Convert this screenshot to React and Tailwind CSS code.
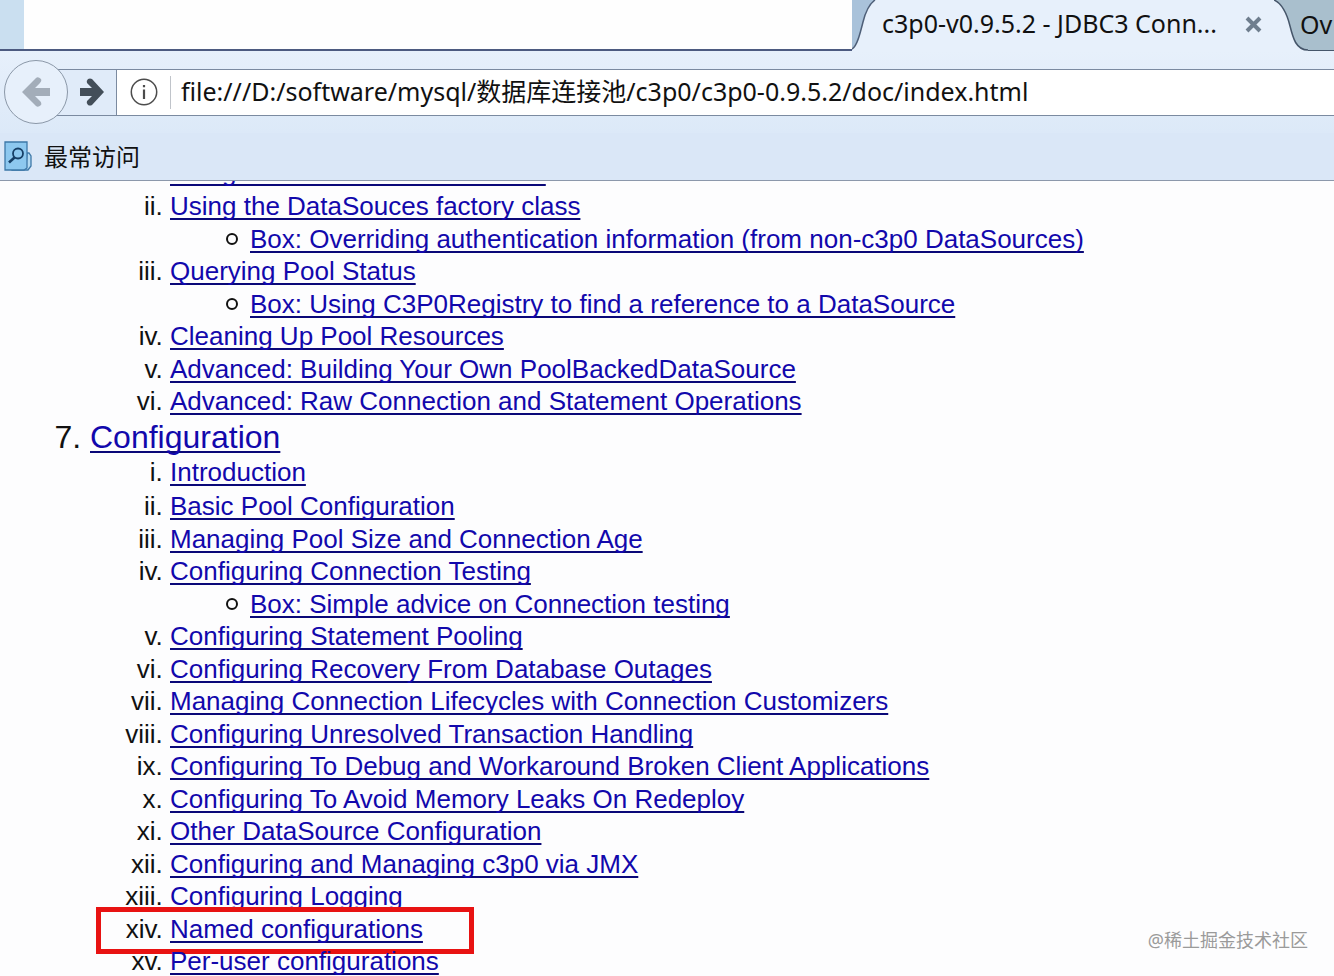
const usageLinks = [
  { label: "Using ComboPooledDataSource" },
  { label: "Using the DataSouces factory class" },
  {
    box: "Box: Overriding authentication information (from non-c3p0 DataSources)",
  },
  { label: "Querying Pool Status" },
  { box: "Box: Using C3P0Registry to find a reference to a DataSource" },
  { label: "Cleaning Up Pool Resources" },
  { label: "Advanced: Building Your Own PoolBackedDataSource" },
  { label: "Advanced: Raw Connection and Statement Operations" },
];

const configurationLinks = [
  { label: "Introduction" },
  { label: "Basic Pool Configuration" },
  { label: "Managing Pool Size and Connection Age" },
  { label: "Configuring Connection Testing" },
  { box: "Box: Simple advice on Connection testing" },
  { label: "Configuring Statement Pooling" },
  { label: "Configuring Recovery From Database Outages" },
  { label: "Managing Connection Lifecycles with Connection Customizers" },
  { label: "Configuring Unresolved Transaction Handling" },
  { label: "Configuring To Debug and Workaround Broken Client Applications" },
  { label: "Configuring To Avoid Memory Leaks On Redeploy" },
  { label: "Other DataSource Configuration" },
  { label: "Configuring and Managing c3p0 via JMX" },
  { label: "Configuring Logging" },
  { label: "Named configurations", highlighted: true },
  { label: "Per-user configurations" },
];

function DocLink({ children }) {
  return (
    <a
      href="#"
      className="text-[#1208ac] underline decoration-[#0a0878] decoration-2 underline-offset-3 [text-decoration-skip-ink:none]"
    >
      {children}
    </a>
  );
}

function SubList({ links }) {
  // boxes sit between the numbered entries but don't count
  const numbered = links.filter((link) => link.label);

  return (
    <ol className="list-[lower-roman] pl-20 text-[26px]">
      {links.map((link) =>
        link.box ? (
          <li
            key={link.box}
            className="list-none odd:leading-[32px] even:leading-[33px]"
          >
            <ul className="pl-14">
              <li className="flex items-center gap-3">
                <span className="size-3 rounded-full border-2 border-[#111]" />
                <DocLink>{link.box}</DocLink>
              </li>
            </ul>
          </li>
        ) : (
          <li
            key={link.label}
            value={numbered.indexOf(link) + 1}
            className="relative first:mb-0.5 odd:leading-[32px] even:leading-[33px]"
          >
            <DocLink>{link.label}</DocLink>
            {link.highlighted && (
              <span className="absolute -top-1.5 -left-[74px] h-[47px] w-[378px] border-5 border-[#e81212]" />
            )}
          </li>
        )
      )}
    </ol>
  );
}

function TabStrip() {
  return (
    <div className="flex h-[51px] shrink-0 bg-[#e7f0fb]">
      <div className="w-6 border-b-2 border-[#4c5a80] bg-[#cadff0]" />
      <div className="flex-1 border-b-2 border-[#4c5a80] bg-[#fefefe]" />
      <svg width="30" height="51" viewBox="0 0 30 51" fill="none">
        <path d="M0 0H23C16 5 13 14 11 22C8 34 5 44 0 48Z" fill="#a9c2da" />
        <path
          d="M23 0C16 5 13 14 11 22C8 34 5 46 0 49"
          stroke="#4e5f78"
          strokeWidth="1.5"
        />
      </svg>
      <div className="flex h-12 items-center">
        <span className="w-[355px] truncate text-[25px] text-[#111]">
          c3p0-v0.9.5.2 - JDBC3 Conn...
        </span>
        <button aria-label="Close tab" className="ml-1 p-1">
          <svg width="17" height="17" viewBox="0 0 17 17">
            <path
              d="M2 2L15 15M15 2L2 15"
              stroke="#6f7e8e"
              strokeWidth="4"
            />
          </svg>
        </button>
      </div>
      <svg
        width="34"
        height="51"
        viewBox="0 0 34 51"
        fill="none"
        className="ml-2"
      >
        <path
          d="M0 0C9 4 13 14 16 26C19 38 22 50 34 50V0Z"
          fill="#a9bfcd"
        />
        <path
          d="M0 0C9 4 13 14 16 26C19 38 22 50 34 50"
          stroke="#46566a"
          strokeWidth="1.5"
        />
      </svg>
      <div className="flex w-[26px] items-center border-b border-[#46566a] bg-[#a9bfcd]">
        <span className="relative -ml-2 text-[25px] text-[#111]">Ov</span>
      </div>
    </div>
  );
}

function Toolbar() {
  return (
    <div className="flex h-[82px] shrink-0 items-center bg-linear-to-b from-[#e7f0fb] to-[#dce9f8] pl-1">
      <button
        aria-label="Back"
        className="z-10 flex size-16 items-center justify-center rounded-full border border-[#8b98a8] bg-[#e7f0fb]"
      >
        <svg width="28" height="30" viewBox="0 0 28 30">
          <path
            d="M0 15L14 1Q16 -1 19 2Q20 4 18 6L13 11H28V19H13L18 24Q20 26 19 28Q16 31 14 29Z"
            fill="#a3adb9"
          />
        </svg>
      </button>
      <div className="-ml-3 flex h-[47px] flex-1 items-stretch border-y border-[#7b8aa0] bg-white">
        <button
          aria-label="Forward"
          className="flex w-[61px] items-center justify-center border-r border-[#7b8aa0] bg-[#e0ebf9] pl-3"
        >
          <svg width="24" height="28" viewBox="0 0 24 28">
            <path
              d="M24 14L12 1Q10 0 8 1Q6 3 7 5L12 10H0V18H12L7 23Q6 25 8 27Q10 28 12 27Z"
              fill="#434e59"
            />
          </svg>
        </button>
        <div className="flex w-[53px] items-center justify-center">
          <svg width="28" height="28" viewBox="0 0 28 28" fill="none">
            <circle cx="14" cy="14" r="12.7" stroke="#4c4c4c" strokeWidth="1.5" />
            <path d="M14 11.5V21M14 7V9.3" stroke="#4c4c4c" strokeWidth="2.2" />
          </svg>
        </div>
        <div className="my-1.5 w-px bg-[#c0c4ca]" />
        <input
          aria-label="Address"
          defaultValue="file:///D:/software/mysql/数据库连接池/c3p0/c3p0-0.9.5.2/doc/index.html"
          className="min-w-0 flex-1 bg-transparent px-2.5 text-[25px] text-[#111] outline-none"
        />
      </div>
    </div>
  );
}

function BookmarkBar() {
  return (
    <div className="flex h-12 shrink-0 items-center border-b border-[#8c98ab] bg-[#dae7f7] pl-1">
      <button className="flex items-center gap-3 text-2xl text-[#111]">
        <svg width="28" height="31" viewBox="0 0 28 31" fill="none">
          <path
            d="M23 12H25L27 15V25L24 29H8V26H22Z"
            fill="#b4daf3"
            stroke="#3d78a8"
            strokeWidth="1.3"
          />
          <path
            d="M1 1H23V27L20 29H1Z"
            fill="#8dc8ef"
            stroke="#3d78a8"
            strokeWidth="1.3"
          />
          <circle cx="14" cy="12.5" r="5" stroke="#163f66" strokeWidth="1.8" />
          <path d="M10.5 16.5L5 21.5" stroke="#163f66" strokeWidth="2.6" />
        </svg>
        最常访问
      </button>
    </div>
  );
}

export default function App() {
  return (
    <div className="relative flex h-screen flex-col overflow-hidden bg-[#fdfdfe] font-['Noto_Sans','Noto_Sans_CJK_SC',sans-serif]">
      <TabStrip />
      <Toolbar />
      <BookmarkBar />

      <main className="min-h-0 flex-1 overflow-hidden font-['Liberation_Sans',Arial,sans-serif] text-[#111]">
        {/* scrolled part way down the table of contents */}
        <ol className="-mt-[25px] list-decimal pl-[90px] text-[32px] leading-[38px]">
          <li className="list-none">
            <SubList links={usageLinks} />
          </li>
          <li value={7}>
            <DocLink>Configuration</DocLink>
            <SubList links={configurationLinks} />
          </li>
        </ol>
      </main>

      <div className="absolute right-[26px] bottom-6 text-lg leading-6 text-[#9a9a9a]">
        @稀土掘金技术社区
      </div>
    </div>
  );
}
